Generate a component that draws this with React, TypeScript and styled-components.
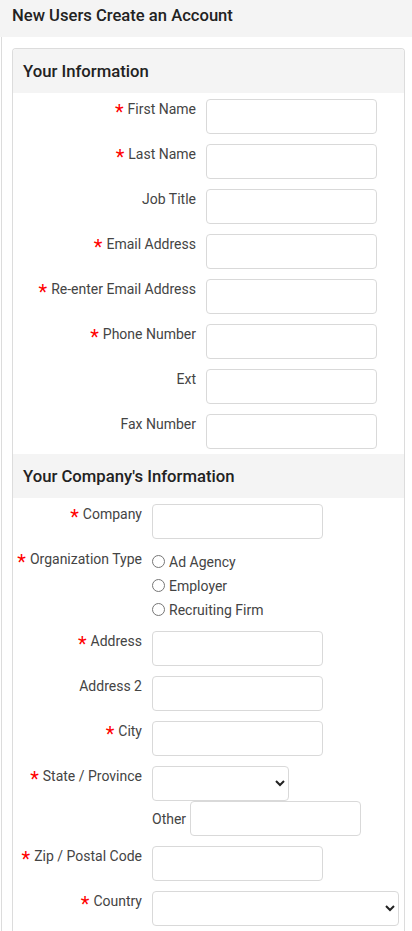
import React from "react";
import styled, { createGlobalStyle } from "styled-components";

const Global = createGlobalStyle`
  html, body { margin: 0; padding: 0; background: #fff; }
  body { font-family: Roboto, "Liberation Sans", Arial, sans-serif; color: #444; }
  * { box-sizing: border-box; }
`;

const Header = styled.div`
  background: #f4f4f4;
  height: 37px;
  padding: 6px 12px 0;
  font-size: 16.6px;
  line-height: 19px;
  font-weight: 500;
  color: #222;
`;

const Body = styled.div`
  margin-left: 1px;
  border-left: 1px solid #dcdcdc;
  padding: 11px 7px 0 10px;
`;

const Panel = styled.div`
  border: 1px solid #dcdcdc;
  border-bottom: none;
  border-radius: 4px 4px 0 0;
  overflow: hidden;
`;

const PanelHeading = styled.div`
  background: #f4f4f4;
  height: 44px;
  display: flex;
  align-items: center;
  padding: 0 10px;
  font-size: 16.7px;
  font-weight: 500;
  color: #222;
`;

const Section = styled.div`
  display: flex;
  flex-direction: column;
  gap: 10px;
  padding: 6px 0 5px;
`;

const Row = styled.div<{ $labelWidth: number }>`
  display: grid;
  grid-template-columns: ${(p) => p.$labelWidth}px 1fr;
  column-gap: 10px;
  align-items: start;
`;

const Label = styled.label`
  text-align: right;
  font-size: 14px;
  line-height: 20px;
  color: #444;
  white-space: nowrap;
`;

const Star = styled.span`
  color: #f00;
  font-size: 20px;
  margin-right: 4px;
  vertical-align: -5px;
  line-height: 0;
`;

const TextInput = styled.input<{ $w?: number }>`
  display: block;
  width: ${(p) => p.$w ?? 171}px;
  height: 35px;
  border: 1px solid #d9d9d9;
  border-radius: 4px;
  background: #fff;
  font: inherit;
  padding: 4px 8px;
`;

const Select = styled.select<{ $w: number }>`
  display: block;
  width: ${(p) => p.$w}px;
  height: 35px;
  border: 1px solid #d9d9d9;
  border-radius: 4px;
  background: #fff;
  font: inherit;
  color: #222;
`;

const Stack = styled.div`
  display: flex;
  flex-direction: column;
`;

const RadioLine = styled.label`
  display: flex;
  align-items: center;
  height: 24px;
  padding-top: 1px;
  font-size: 14px;
  color: #444;
  input {
    margin: 0 4px 0 0;
    width: 13px;
    height: 13px;
  }
`;

const InlineField = styled.div`
  display: flex;
  align-items: center;
  gap: 4px;
  font-size: 14px;
  color: #444;
`;

const Req = ({ children }: { children: React.ReactNode }) => (
  <>
    <Star>*</Star>
    {children}
  </>
);

type F = { label: string; req?: boolean };

const personal: F[] = [
  { label: "First Name", req: true },
  { label: "Last Name", req: true },
  { label: "Job Title" },
  { label: "Email Address", req: true },
  { label: "Re-enter Email Address", req: true },
  { label: "Phone Number", req: true },
  { label: "Ext" },
  { label: "Fax Number" },
];

const LW2 = 129;

export default function App() {
  return (
    <>
      <Global />
      <Header>New Users Create an Account</Header>
      <Body>
        <Panel>
          <PanelHeading>Your Information</PanelHeading>
          <Section>
            {personal.map((f) => (
              <Row key={f.label} $labelWidth={183}>
                <Label>{f.req ? <Req>{f.label}</Req> : f.label}</Label>
                <TextInput type="text" />
              </Row>
            ))}
          </Section>
          <PanelHeading>Your Company's Information</PanelHeading>
          <Section>
            <Row $labelWidth={LW2}>
              <Label><Req>Company</Req></Label>
              <TextInput type="text" />
            </Row>
            <Row $labelWidth={LW2}>
              <Label><Req>Organization Type</Req></Label>
              <Stack>
                {["Ad Agency", "Employer", "Recruiting Firm"].map((o) => (
                  <RadioLine key={o}>
                    <input type="radio" name="orgtype" />
                    {o}
                  </RadioLine>
                ))}
              </Stack>
            </Row>
            <Row $labelWidth={LW2}>
              <Label><Req>Address</Req></Label>
              <TextInput type="text" />
            </Row>
            <Row $labelWidth={LW2}>
              <Label>Address 2</Label>
              <TextInput type="text" />
            </Row>
            <Row $labelWidth={LW2}>
              <Label><Req>City</Req></Label>
              <TextInput type="text" />
            </Row>
            <Row $labelWidth={LW2}>
              <Label><Req>State / Province</Req></Label>
              <Stack>
                <Select $w={137}>
                  <option></option>
                </Select>
                <InlineField>
                  Other
                  <TextInput type="text" />
                </InlineField>
              </Stack>
            </Row>
            <Row $labelWidth={LW2}>
              <Label><Req>Zip / Postal Code</Req></Label>
              <TextInput type="text" />
            </Row>
            <Row $labelWidth={LW2}>
              <Label><Req>Country</Req></Label>
              <Select $w={247}>
                <option></option>
              </Select>
            </Row>
          </Section>
        </Panel>
      </Body>
    </>
  );
}
